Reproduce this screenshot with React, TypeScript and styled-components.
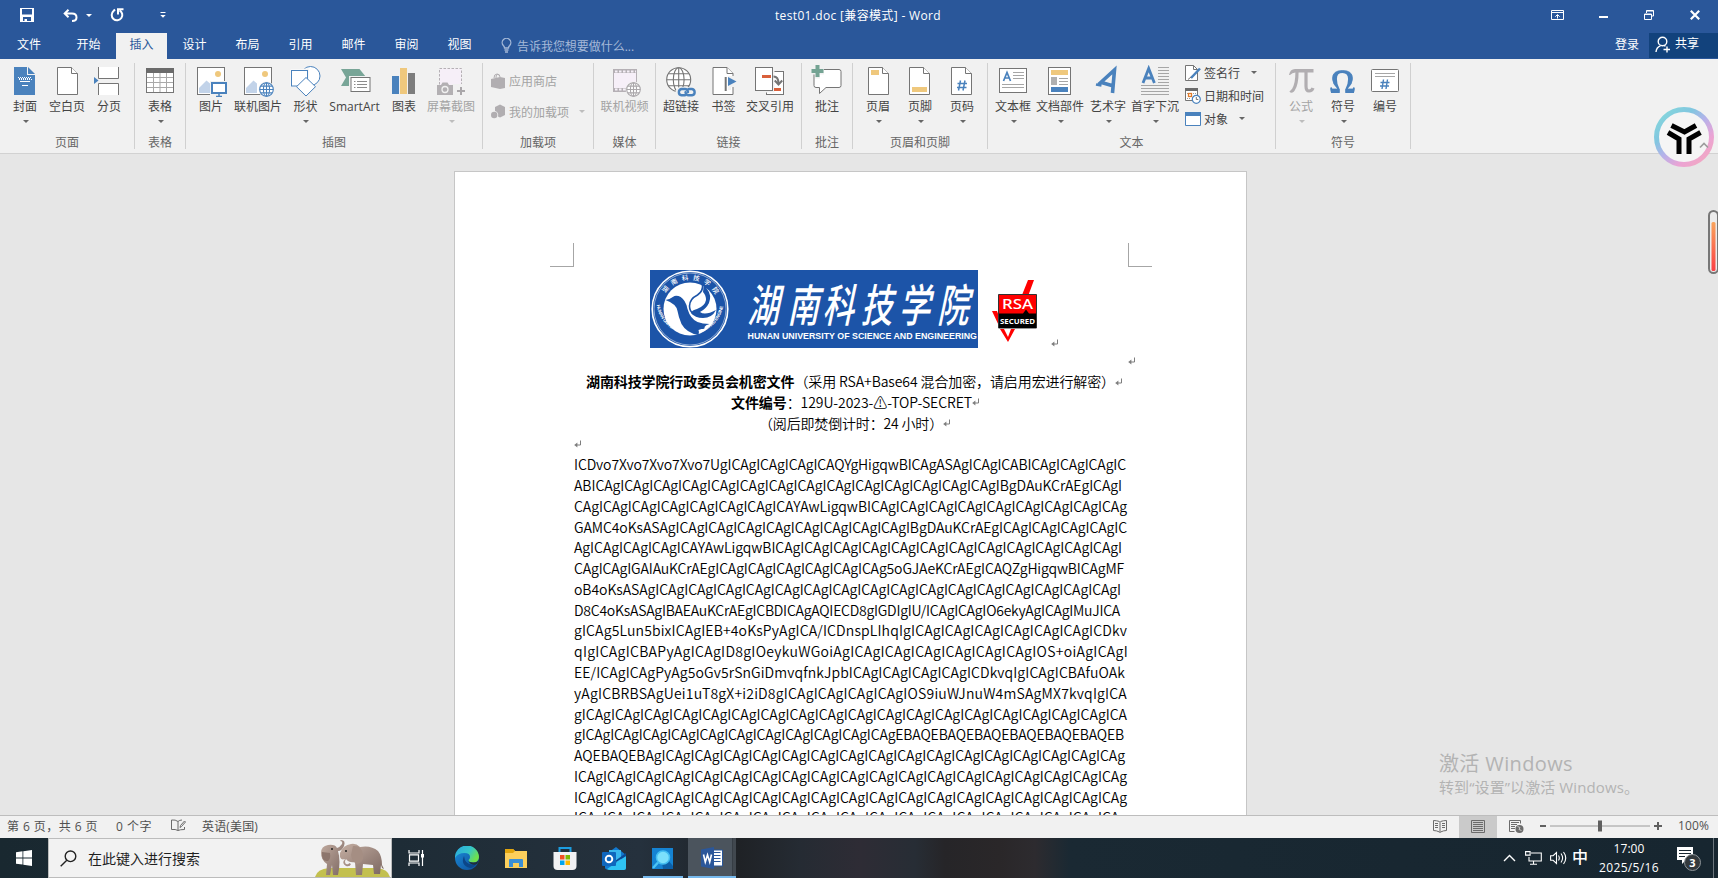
import React, { useLayoutEffect, useRef } from 'react';
import styled, { createGlobalStyle, css } from 'styled-components';

const BLUE = '#2a579a';
const ICON_BLUE = '#4a82bd';
const LINE = '#757575';
const YELLOW = '#efc87d';

const Global = createGlobalStyle`
  * { box-sizing: border-box; }
  html, body { margin: 0; padding: 0; overflow: hidden; }
  body { font-family: 'Open Sans', 'Noto Sans CJK SC', sans-serif; font-size: 12px; color: #444; }
  svg { display: block; flex: none; }
`;

const Screen = styled.div`
  position: relative;
  width: 1718px;
  height: 878px;
  display: flex;
  flex-direction: column;
  background: #e6e6e6;
  overflow: hidden;
`;

/* ---------- title bar and tabs ---------- */
const TitleBar = styled.header`
  position: relative;
  height: 33px;
  flex: none;
  display: flex;
  align-items: flex-start;
  justify-content: space-between;
  background: ${BLUE};
  color: #fff;
`;
const QuickAccess = styled.div`
  display: flex;
  align-items: center;
  height: 30px;
  padding-left: 20px;
`;
const Gap = styled.span<{ $w: number }>`
  width: ${p => p.$w}px;
  flex: none;
`;
const WindowTitle = styled.div`
  position: absolute;
  left: 775px;
  top: 6px;
  line-height: 20px;
  white-space: nowrap;
`;
const WindowButtons = styled.div`
  display: flex;
  height: 30px;
  align-items: center;
`;
const WinButton = styled.span`
  width: 46px;
  display: flex;
  justify-content: center;
`;

const TabRow = styled.nav`
  height: 26px;
  flex: none;
  display: flex;
  background: ${BLUE};
  color: #fff;
`;
const Tab = styled.span<{ $active?: boolean; $w?: number }>`
  width: ${p => p.$w ?? 51}px;
  margin-right: 2px;
  line-height: 24px;
  text-align: center;
  ${p => p.$active && css`background: #f1f1f1; color: ${BLUE};`}
`;
const TellMe = styled.span`
  display: flex;
  align-items: center;
  gap: 5px;
  padding: 0 0 1px 14px;
  color: #a5b9d8;
`;
const Account = styled.div`
  margin-left: auto;
  display: flex;
  line-height: 24px;
`;
const SignIn = styled.span`
  padding-right: 10px;
`;
const Share = styled.span`
  width: 69px;
  height: 25px;
  padding-left: 6px;
  display: flex;
  align-items: flex-start;
  gap: 4px;
  line-height: 22px;
  background: #12427c;
`;

/* ---------- ribbon ---------- */
const Ribbon = styled.section`
  height: 95px;
  flex: none;
  display: flex;
  background: #f1f1f1;
  border-bottom: 1px solid #d2d2d2;
`;
const Group = styled.div<{ $w: number }>`
  position: relative;
  width: ${p => p.$w}px;
  flex: none;
  display: flex;
  flex-direction: column;
  justify-content: space-between;
  padding: 6px 0 2px;
  &::after {
    content: '';
    position: absolute;
    right: 0;
    top: 4px;
    height: 86px;
    width: 1px;
    background: #d0d0d0;
  }
`;
const Buttons = styled.div`
  display: flex;
  padding-left: 2px;
`;
const GroupLabel = styled.div`
  text-align: center;
  line-height: 16px;
  padding-right: 1px;
  color: #666;
`;
const BigButton = styled.div<{ $w: number; $off?: boolean }>`
  width: ${p => p.$w}px;
  flex: none;
  display: flex;
  flex-direction: column;
  align-items: center;
  white-space: nowrap;
  color: ${p => (p.$off ? '#a3a3a3' : '#444')};
`;
const BigLabel = styled.span`
  margin-top: 2px;
  line-height: 16px;
`;
const Caret = styled.i<{ $off?: boolean; $mt?: number; $light?: boolean }>`
  width: 0;
  height: 0;
  flex: none;
  margin-top: ${p => p.$mt ?? 0}px;
  margin-left: 1px;
  border: 3px solid transparent;
  border-top: 3px solid ${p => (p.$light ? '#fff' : p.$off ? '#bdbdbd' : '#666')};
  border-bottom: 0;
`;
const SmallStack = styled.div<{ $pad: number; $row: number; $top?: number }>`
  display: flex;
  flex-direction: column;
  margin-top: ${p => p.$top ?? 0}px;
  padding-left: ${p => p.$pad}px;
  > div { height: ${p => p.$row}px; }
`;
const SmallButton = styled.div<{ $off?: boolean }>`
  display: flex;
  align-items: center;
  gap: 3px;
  white-space: nowrap;
  color: ${p => (p.$off ? '#a3a3a3' : '#444')};
`;

/* ---------- document ---------- */
const Workspace = styled.main`
  flex: 1;
  min-height: 0;
  overflow: hidden;
  padding: 17px 0 0 454px;
`;
const Page = styled.article`
  width: 793px;
  height: 1120px;
  background: #fff;
  border: 1px solid #c6c6c6;
  padding: 71px 94px 0 95px;
  color: #000;
  font-family: 'Noto Sans CJK SC', sans-serif;
  font-weight: 350;
  font-size: 14px;
`;
const Corners = styled.div`
  display: flex;
  justify-content: space-between;
`;
const Corner = styled.i<{ $side: 'left' | 'right' }>`
  width: 24px;
  height: 24px;
  border-bottom: 1px solid #a6a6a6;
  ${p => (p.$side === 'left' ? 'border-right' : 'border-left')}: 1px solid #a6a6a6;
`;
const Body = styled.div`
  padding: 3px 24px 0 24px;
`;
const LogoLine = styled.div`
  display: flex;
  align-items: flex-start;
  height: 80.5px;
  padding-left: 76px;
`;
const Drop = styled.span<{ $y: number }>`
  padding-top: ${p => p.$y}px;
  flex: none;
`;
const TextLine = styled.div<{ $x?: number }>`
  height: 20.77px;
  line-height: 20.77px;
  padding-left: ${p => p.$x ?? 0}px;
  display: flex;
  align-items: center;
  white-space: pre;
`;
const FitSpan = styled.span`
  white-space: pre;
  flex: none;
`;

const Fit = ({ w, children }: { w: number; children: React.ReactNode }) => {
  const ref = useRef<HTMLSpanElement>(null);
  useLayoutEffect(() => {
    const el = ref.current;
    if (!el) return;
    el.style.letterSpacing = '0px';
    const n = Array.from(el.textContent ?? '').length;
    el.style.letterSpacing = `${(w - el.getBoundingClientRect().width) / n}px`;
  }, [w]);
  return <FitSpan ref={ref}>{children}</FitSpan>;
};

const Mark = () => (
  <svg width="8" height="8" viewBox="0 0 8 8" fill="none" stroke="#7d7d7d">
    <path d="M6.500 .5v4.500H2" />
    <path d="M3.400 2.400v5.200L.2 5z" fill="#7d7d7d" stroke="none" />
  </svg>
);

/* ---------- status bar ---------- */
const StatusBar = styled.footer`
  height: 22px;
  flex: none;
  display: flex;
  align-items: center;
  background: #f1f1f1;
  box-shadow: 0 -1px 0 #bdbdbd;
  padding: 0 0 3px 7px;
  color: #505050;
  position: relative;
  white-space: pre;
`;
const ViewButton = styled.span<{ $on?: boolean }>`
  width: 38px;
  height: 22px;
  margin-bottom: -3px;
  padding-bottom: 2px;
  display: flex;
  justify-content: center;
  align-items: center;
  background: ${p => (p.$on ? '#cacaca' : 'transparent')};
`;

/* ---------- taskbar ---------- */
const Taskbar = styled.div`
  height: 40px;
  flex: none;
  display: flex;
  align-items: stretch;
  color: #fff;
  background: linear-gradient(90deg, #192830 0, #1e2c36 400px, #25313d 640px, #1f2226 740px, #252b33 800px, #2e2c35 860px,
    #272d35 915px, #262528 945px, #2a2729 1000px, #2d2b2f 1035px, #1a2933 1070px, #182731 1400px, #172630 1718px);
`;
const Start = styled.div`
  width: 48px;
  display: flex;
  justify-content: center;
  align-items: center;
`;
const Search = styled.div`
  width: 344px;
  border: 1px solid #bcbcbc;
  background: #f2f2f2;
  display: flex;
  align-items: center;
  padding-left: 11px;
  gap: 11px;
  color: #1f1f1f;
  font-size: 14px;
  > svg:last-child { margin-left: auto; align-self: flex-end; }
`;
const TaskButton = styled.div<{ $w?: number; $state?: 'open' | 'active' }>`
  position: relative;
  width: ${p => p.$w ?? 48}px;
  display: flex;
  justify-content: center;
  align-items: center;
  ${p => p.$state === 'active' && css`background: linear-gradient(90deg, #4b545d 0 44px, #363d44 44px 45px, #41484f 45px);`}
  ${p => p.$state && css`
    &::after {
      content: '';
      position: absolute;
      left: ${p.$state === 'open' ? 4 : 0}px;
      width: ${p.$state === 'open' ? 40 : 48}px;
      bottom: 0;
      height: 2px;
      background: #76b9ed;
    }`}
`;
const Tray = styled.div`
  margin-left: auto;
  display: flex;
  align-items: center;
`;
const Clock = styled.div`
  width: 70px;
  font-size: 12px;
  line-height: 19px;
  text-align: center;
  white-space: nowrap;
`;
const Ime = styled.span`
  font-size: 16px;
  font-weight: 500;
  line-height: 20px;
  padding: 0 1px 2px 5px;
`;

/* ---------- overlays ---------- */
const Watermark = styled.div`
  position: absolute;
  left: 1439px;
  top: 750px;
  color: #b3b3b3;
  white-space: pre;
`;
const MarkBig = styled.div`
  font-size: 20px;
  line-height: 27px;
`;
const MarkSmall = styled.div`
  font-size: 15px;
  line-height: 21px;
`;
const Floating = styled.div<{ $x: number; $y: number }>`
  position: absolute;
  left: ${p => p.$x}px;
  top: ${p => p.$y}px;
`;

/* ---------- ribbon icons (32 x 32) ---------- */
const I = ({ children }: { children: React.ReactNode }) => (
  <svg width="32" height="32" viewBox="0 0 32 32" fill="none">{children}</svg>
);
const Doc = ({ x }: { x: number }) => (
  <g stroke={LINE} fill="#fff">
    <path d={`M${x + 0.5} 2.500h14l6 6v21h-20z`} />
    <path d={`M${x + 14.5} 2.500v6h6`} />
  </g>
);
const Globe = ({ x, y, r, c }: { x: number; y: number; r: number; c: string }) => (
  <g stroke={c} fill="#fff" strokeWidth="1.100">
    <circle cx={x} cy={y} r={r} />
    <ellipse cx={x} cy={y} rx={r * 0.45} ry={r} />
    <path d={`M${x - r} ${y}h${2 * r}M${x} ${y - r}v${2 * r}M${x - r * 0.86} ${y - r * 0.5}h${r * 1.72}M${x - r * 0.86} ${y + r * 0.5}h${r * 1.72}`} />
  </g>
);
const PictureBase = () => (
  <>
    <rect x="2.500" y="2.500" width="27" height="27" fill="#fff" stroke={LINE} />
    <circle cx="23" cy="9" r="3" fill={YELLOW} />
    <path d="M4 28v-5l7.500-7.500 3.500 3V28z" fill="#c2d3e9" />
  </>
);

const icons: Record<string, React.ReactNode> = {
  cover: (
    <I>
      <path d="M5 2h13v8h8v20H5z" fill={ICON_BLUE} />
      <path d="M19 2l7 7h-7z" fill={ICON_BLUE} />
      <path d="M9 12.500h13M10 14.500h13" stroke="#fff" strokeDasharray="1 1" />
      <path d="M9 13.500h13" stroke="#fff" strokeDasharray="1 1" strokeDashoffset="1" />
      <path d="M11 16.500h10M13 20.500h6" stroke="#fff" />
    </I>
  ),
  blank: <I><Doc x={6} /></I>,
  pageBreak: (
    <I>
      <path d="M5.500 2v11.500h20V2M5.500 30V18.500h20V30" fill="#fff" stroke={LINE} />
      <path d="M1 12l4.500 3.500L1 19z" fill={ICON_BLUE} />
    </I>
  ),
  table: (
    <I>
      <rect x="2.500" y="3.500" width="27" height="24" fill="#fff" stroke={LINE} />
      <path d="M2 3h28v5H2z" fill="#6b6b6b" />
      <path d="M3 12.500h26M3 17.500h26M3 22.500h26M9.500 8v19M16 8v19M22.500 8v19" stroke="#a9a9a9" />
    </I>
  ),
  picture: (
    <I>
      <PictureBase />
      <rect x="15" y="16" width="18" height="15" fill="#f1f1f1" />
      <rect x="17" y="18" width="14" height="10" fill="#fff" stroke={ICON_BLUE} strokeWidth="2" />
      <path d="M24 29v2M21 31.500h6" stroke={ICON_BLUE} strokeWidth="1.500" />
    </I>
  ),
  onlinePic: <I><PictureBase /><circle cx="24.500" cy="24.500" r="8" fill="#f1f1f1" /><Globe x={24.5} y={24.5} r={6.8} c={ICON_BLUE} /></I>,
  shapes: (
    <I>
      <g fill="#fff" stroke={ICON_BLUE}>
        <circle cx="20.500" cy="11" r="9.500" />
        <rect x="0" y="4" width="18" height="18" stroke="#f1f1f1" />
        <rect x="1.500" y="5.500" width="16" height="15.500" />
        <path d="M16 12.500l9.500 9.200L16 31l-9.500-9.300z" />
      </g>
    </I>
  ),
  smartArt: (
    <I>
      <path d="M2 4h18.500l6.500 8-4 4H11v5H2l5-8.500z" fill="#78a597" />
      <rect x="10" y="11" width="22" height="17" fill="#f1f1f1" />
      <rect x="12" y="12.500" width="19" height="14" fill="#fff" stroke={LINE} />
      <path d="M15 16.500h1.500M18 16.500h10M15 19.500h1.500M18 19.500h10M15 22.500h1.500M18 22.500h10" stroke="#8c8c8c" />
    </I>
  ),
  chart: (
    <I>
      <path d="M4 11h7v18H4z" fill={ICON_BLUE} />
      <path d="M12 3h7v26h-7z" fill={YELLOW} />
      <path d="M20 8h7v21h-7z" fill="#7d7d7d" />
    </I>
  ),
  screenshot: (
    <I>
      <rect x="4.500" y="3.500" width="22" height="24" fill="#f6eff8" stroke="#b5b0b5" strokeDasharray="2.500 1.500" />
      <path d="M17 19h13v12H17z" fill="#f1f1f1" />
      <path d="M2 20h4l1.500-2.500h5L14 20h4v10H2z" fill="#b3b0b3" />
      <circle cx="10" cy="24.500" r="3" stroke="#f1f1f1" strokeWidth="1.300" />
      <path d="M22 26h8M26 22v8" stroke="#aaa7aa" strokeWidth="2" />
    </I>
  ),
  video: (
    <I>
      <rect x="4.500" y="4.500" width="23" height="22" fill="#f6eff8" stroke="#b5b0b5" />
      <path d="M5 6.500h22M5 24.500h22" stroke="#b5b0b5" strokeWidth="3" />
      <path d="M6 6.500h21M6 24.500h21" stroke="#f6eff8" strokeWidth="2" strokeDasharray="2.500 1.500" />
      <circle cx="24.500" cy="24.500" r="8" fill="#f1f1f1" />
      <Globe x={24.5} y={24.5} r={6.8} c="#aaa7aa" />
    </I>
  ),
  link: (
    <I>
      <Globe x={13.7} y={14.7} r={12} c={LINE} />
      <rect x="10.500" y="22" width="22" height="10" rx="5" fill="#f1f1f1" />
      <g stroke={ICON_BLUE} strokeWidth="2.400" strokeLinecap="round">
        <path d="M20 30.300h-3.500a3.200 3.200 0 0 1 0-6.300h3.500q2.500 0 3 3" />
        <path d="M23.500 24h3.500a3.200 3.200 0 0 1 0 6.300h-3.500q-2.500 0-3-3" />
      </g>
    </I>
  ),
  bookmark: (
    <I>
      <Doc x={4.5} />
      <path d="M20 11h9v11h-6v3h-3z" fill="#f1f1f1" />
      <path d="M17.700 12v14" stroke={LINE} strokeWidth="2" />
      <path d="M20 12l8.500 4.500L20 21z" fill={ICON_BLUE} />
    </I>
  ),
  crossRef: (
    <I>
      <rect x="12.500" y="6.500" width="17" height="23" fill="#fff" stroke={LINE} />
      <rect x=".5" y="1.500" width="20" height="26" fill="#f1f1f1" />
      <rect x="1.500" y="2.500" width="17" height="23" fill="#fff" stroke={LINE} />
      <path d="M8 11.500h9M20 24.500h7" stroke="#d9603b" strokeWidth="3" />
      <path d="M19.500 11.500q5 0 5 7M20.800 15.500l3.700 4 3.700-4" stroke={LINE} strokeWidth="2" />
    </I>
  ),
  comment: (
    <I>
      <path d="M5 4.500h23q2 0 2 2v14q0 2-2 2H15l-6.500 6v-6H5q-2 0-2-2v-14q0-2 2-2z" fill="#fff" stroke={LINE} />
      <path d="M0 3h4V-1h5v4h4v6.500H9v4H4v-4H0z" fill="#f1f1f1" />
      <path d="M.5 4h4V0h4v4h4v4h-4v4h-4V8h-4z" fill="#74a393" />
    </I>
  ),
  header: <I><Doc x={6} /><path d="M9 5h8v5H9z" fill={YELLOW} /></I>,
  footer: <I><Doc x={5} /><path d="M8 22h15v5H8z" fill={YELLOW} /></I>,
  pageNo: (
    <I>
      <Doc x={5} />
      <path d="M14.500 15.500l-2 10M19 15.500l-2 10M11.500 18.500h9.500M11 22.500h9.500" stroke={ICON_BLUE} strokeWidth="1.500" />
    </I>
  ),
  textBox: (
    <I>
      <rect x="2.500" y="3.500" width="27" height="24" fill="#fff" stroke={LINE} />
      <path d="M6.500 16L10 7.500 13.500 16M7.800 13h4.500" stroke={ICON_BLUE} strokeWidth="1.700" />
      <path d="M16 7.500h11M16 10.500h11M16 13.500h11M5 19.500h22M5 22.500h22" stroke="#a6a6a6" />
    </I>
  ),
  parts: (
    <I>
      <rect x="4.500" y="2.500" width="22" height="27" fill="#fff" stroke={LINE} />
      <path d="M7 5h17v5H7z" fill={YELLOW} />
      <path d="M7 12h6v8H7z" fill="#b0b0b0" />
      <path d="M15 13.500h9M15 16.500h9M15 19.500h9" stroke="#a6a6a6" />
      <path d="M7 22h17v5H7z" fill={ICON_BLUE} />
    </I>
  ),
  wordArt: (
    <I>
      <path d="M6.500 19.500L22.500 5 20.500 28M9.500 17.500l12 3.500" stroke={ICON_BLUE} strokeWidth="3.600" />
      <path d="M4 19.500l5.500 1" stroke={ICON_BLUE} strokeWidth="2.500" />
    </I>
  ),
  dropCap: (
    <I>
      <path d="M4 18L9.700 3.500 15.400 18M6 13h7.400" stroke={ICON_BLUE} strokeWidth="2.800" />
      <path d="M19 2.500h11M19 5.500h11M19 8.500h11M19 11.500h11M19 14.500h11M19 17.500h11M2 20.500h28M2 23.500h28M2 26.500h28M2 29.500h28" stroke="#a6a6a6" />
    </I>
  ),
  pi: (
    <I>
      <path d="M4 10q1-6 6-6h18.500v3.500H10.500Q7 7.500 5 10z" fill="#b1aeb1" />
      <path d="M12 7q0 12-3.500 17.500Q7 27 5.500 25.500M21 7v14q0 5 3 5t4-3" stroke="#b1aeb1" strokeWidth="3.200" />
    </I>
  ),
  omega: (
    <I>
      <path d="M4 22.500L4.800 27h7v-2.500Q9 20 9 14q0-7 6.500-7T22 14q0 6-2.800 10.500V27h7l.8-4.500" stroke={ICON_BLUE} strokeWidth="1.800" />
      <path d="M11 24Q5.500 19 5.500 13.500q0-8 10-8t10 8q0 5.500-5.500 10.500 2-5 2-10.500 0-6.500-6.500-6.500T9 13.500Q9 19 11 24zM4 24h8v3.500H4.500zM19 24h8l-.5 3.500H19z" fill={ICON_BLUE} stroke={ICON_BLUE} strokeWidth=".8" />
    </I>
  ),
  numbering: (
    <I>
      <rect x="2.500" y="4.500" width="27" height="22" rx="1" fill="#fff" stroke={LINE} />
      <path d="M6 8.500h20M6 11.500h20" stroke="#a6a6a6" />
      <path d="M14.500 14.500l-1.500 9.500M18.500 14.500l-1.500 9.500M11.500 17.500h9M11 21h9" stroke={ICON_BLUE} strokeWidth="1.400" />
    </I>
  ),
};

type Item = { icon: string; label: string; w: number; drop?: boolean; off?: boolean };
const Big = ({ icon, label, w, drop, off }: Item) => (
  <BigButton $w={w} $off={off}>
    {icons[icon]}
    <BigLabel>{label}</BigLabel>
    {drop && <Caret $mt={5} $off={off} />}
  </BigButton>
);
const BigGroup = ({ w, label, items, children }: { w: number; label: string; items: Item[]; children?: React.ReactNode }) => (
  <Group $w={w}>
    <Buttons>
      {items.map(i => <Big key={i.label} {...i} />)}
      {children}
    </Buttons>
    <GroupLabel>{label}</GroupLabel>
  </Group>
);

const tabs = ['开始', '插入', '设计', '布局', '引用', '邮件', '审阅', '视图'];

const bodyLines: [string, number][] = [
  ['ICDvo7Xvo7Xvo7Xvo7UgICAgICAgICAgICAQYgHigqwBICAgASAgICAgICABICAgICAgICAgIC', 552],
  ['ABICAgICAgICAgICAgICAgICAgICAgICAgICAgICAgICAgICAgICAgICAgIBgDAuKCrAEgICAgI', 548],
  ['CAgICAgICAgICAgICAgICAgICAgICAYAwLigqwBICAgICAgICAgICAgICAgICAgICAgICAgICAg', 553],
  ['GAMC4oKsASAgICAgICAgICAgICAgICAgICAgICAgICAgIBgDAuKCrAEgICAgICAgICAgICAgIC', 553],
  ['AgICAgICAgICAgICAYAwLigqwBICAgICAgICAgICAgICAgICAgICAgICAgICAgICAgICAgICAgI', 548],
  ['CAgICAgIGAIAuKCrAEgICAgICAgICAgICAgICAgICAg5oGJAeKCrAEgICAQZgHigqwBICAgMF', 550],
  ['oB4oKsASAgICAgICAgICAgICAgICAgICAgICAgICAgICAgICAgICAgICAgICAgICAgICAgICAgI', 547],
  ['D8C4oKsASAgIBAEAuKCrAEgICBDICAgAQIECD8gIGDIgIU/ICAgICAgIO6ekyAgICAgIMuJICA', 546],
  ['gICAg5Lun5bixICAgIEB+4oKsPyAgICA/ICDnspLIhqIgICAgICAgICAgICAgICAgICAgICDkv', 553],
  ['qIgICAgICBAPyAgICAgID8gIOeykuWGoiAgICAgICAgICAgICAgICAgICAgIOS+oiAgICAgI', 554],
  ['EE/ICAgICAgPyAg5oGv5rSnGiDmvqfnkJpbICAgICAgICAgICAgICDkvqIgICAgICBAfuOAk', 551],
  ['yAgICBRBSAgUei1uT8gX+i2iD8gICAgICAgICAgICAgIOS9iuWJnuW4mSAgMX7kvqIgICA', 553],
  ['gICAgICAgICAgICAgICAgICAgICAgICAgICAgICAgICAgICAgICAgICAgICAgICAgICAgICAgICA', 553],
  ['gICAgICAgICAgICAgICAgICAgICAgICAgICAgICAgICAgEBAQEBAQEBAQEBAQEBAQEBAQEB', 550],
  ['AQEBAQEBAgICAgICAgICAgICAgICAgICAgICAgICAgICAgICAgICAgICAgICAgICAgICAgICAg', 551],
  ['ICAgICAgICAgICAgICAgICAgICAgICAgICAgICAgICAgICAgICAgICAgICAgICAgICAgICAgICAg', 553],
  ['ICAgICAgICAgICAgICAgICAgICAgICAgICAgICAgICAgICAgICAgICAgICAgICAgICAgICAgICAg', 553],
  ['ICAgICAgICAgICAgICAgICAgICAgICAgICAgICAgICAgICAgICAgICAgICAgICAgICAgICAgICAg', 553],
];

const UniversityBanner = () => (
  <svg width="328" height="78" viewBox="0 0 328 78" overflow="visible">
    <rect width="328" height="78" fill="#1c54a8" />
    <g fill="none" stroke="#fff">
      <circle cx="40" cy="39" r="37.800" strokeWidth="1.600" />
      <circle cx="40" cy="39" r="36" strokeWidth=".5" />
    </g>
    <circle cx="40" cy="39" r="26.500" fill="#fff" />
    <defs>
      <path id="ringBottom" d="M6.800 35a33.500 33.500 0 0 0 66.400 0" />
      <path id="ringTop" d="M13.500 27a29 29 0 0 1 53 0" />
    </defs>
    <text fontSize="4.500" fontWeight="700" fill="#fff" fontFamily="Liberation Sans, sans-serif">
      <textPath href="#ringBottom" textLength="108">HUNAN UNIVERSITY OF SCIENCE AND ENGINEERING</textPath>
    </text>
    <text fontSize="6.500" fontWeight="500" fill="#fff" fontFamily="Noto Sans CJK SC, sans-serif">
      <textPath href="#ringTop" startOffset="4" textLength="60">湖南科技学院</textPath>
    </text>
    <g fill="#1c54a8">
      <path d="M15.500 30q5-1 9-4 6-1 10 5 2 3 3 8 3 10 10 13 5 2 12 2-4 1-5 3 1 2-3 2l-3 1q1 2 0 5-12-2-17-11-3-7-4-13-1-7-12-11z" />
      <path d="M54 13l3 6q5 6 2 14-3 6-9 9 5 4 16-2-4 8-13 8-8 0-12-5 1-3 6-4 8-3 9-9 0-5-3-8z" />
    </g>
    <path d="M52.500 14q1 7-5 11-8 4-8 11 0 5 4 8" fill="none" stroke="#1c54a8" strokeWidth="1.600" />
    <text x="144 201 251 306 360 415" y="52" fontSize="45" fill="#fff" fontFamily="Noto Sans CJK SC, sans-serif" fontWeight="500"
      transform="translate(7.500 0) skewX(-12) scale(.7 1)">湖南科技学院</text>
    <text x="97.500" y="69" fontSize="9.500" fontWeight="700" fill="#fff" fontFamily="Liberation Sans, sans-serif"
      textLength="229.500" lengthAdjust="spacingAndGlyphs">HUNAN UNIVERSITY OF SCIENCE AND ENGINEERING</text>
  </svg>
);

const RsaBadge = () => (
  <svg width="46" height="64" viewBox="0 0 46 64" overflow="visible">
    <path d="M36 1h6l-5.500 15h-6.500zM0 32h5l3 8v9zM8 50h4l4 8 3-8h4l-7 13z" fill="#f00" />
    <path d="M6.500 15.500h38v33.500h-38z" fill="#f00" stroke="#333" />
    <path d="M7 34.500h24l3-4 3 4h7V49H7z" fill="#000" />
    <text x="10" y="30" fontSize="15" fill="#fff" fontFamily="Noto Sans, sans-serif" fontWeight="500" textLength="31" lengthAdjust="spacingAndGlyphs">RSA</text>
    <text x="8" y="44.500" fontSize="7.500" fill="#fff" fontFamily="Noto Sans, sans-serif" fontWeight="700" textLength="35" lengthAdjust="spacingAndGlyphs">SECURED</text>
  </svg>
);

const Elephants = () => (
  <svg width="76" height="37" viewBox="0 0 76 37">
    <defs>
      <linearGradient id="skin" x1="0" y1="0" x2="1" y2="1">
        <stop offset="0" stopColor="#c4aea2" />
        <stop offset="1" stopColor="#7b6660" />
      </linearGradient>
    </defs>
    <path d="M0 37q2-8 14-9h48q11 1 13 9z" fill="#c3c04f" />
    <path d="M11 35l1-11q-6-4-6-11 0-7 7-8 7-1 9 3 3-1 5-4 1-3-2-3l1-1q5 0 3 6-2 5-6 5 3 10 0 24h-5l-1-10-2 10z" fill="url(#skin)" />
    <path d="M7 12q-1 10 6 9 3-2 2-8z" fill="#8d766d" />
    <path d="M30 19q-6 2-5-6 3-8 11-9 5-1 9 3 11-2 18 4 4 5 4 14l2 4-2-1-1-3-1 9h-6l-1-9-10-1-1 11h-6l-1-13q-6 1-9-3-2 3 0 5 3 1 3-1l2 1q-1 3-5 2-5-3-1-7z" fill="url(#skin)" />
    <path d="M38 6q9-1 10 9 1 8-6 9-5-2-6-9z" fill="#a58e83" />
    <circle cx="31" cy="11" r="1" fill="#222" />
    <circle cx="17" cy="9" r="1" fill="#222" />
  </svg>
);

export default function App() {
  return (
    <>
      <Global />
      <Screen>
        <TitleBar>
          <QuickAccess>
            <svg width="14" height="14" viewBox="0 0 14 14"><path d="M0 0h14v14H0zM2 1v5.500h10V1zM3 9v4h1.500v-2H7v2h4V9z" fill="#fff" fillRule="evenodd" /></svg>
            <Gap $w={29} />
            <svg width="15" height="13" viewBox="0 0 15 13" fill="none" stroke="#fff" strokeWidth="2"><path d="M1.500 4.500h7.500q4.500 0 4.500 4 0 3.500-4.500 3.500M5.500.8L1.700 4.500l3.800 3.700" /></svg>
            <Gap $w={7} />
            <Caret $light />
            <Gap $w={18} />
            <svg width="14" height="14" viewBox="0 0 14 14" fill="none" stroke="#fff" strokeWidth="2"><path d="M3.500 3A5.300 5.300 0 1 0 9.500 2.300M8 6.500V1.200h5.500M3.500 3L5 1.500" /></svg>
            <Gap $w={36} />
            <svg width="6" height="6" viewBox="0 0 6 6"><path d="M.5 0h5v1h-5zM.3 3h5.400L3 5.800z" fill="#fff" /></svg>
          </QuickAccess>
          <WindowTitle><Fit w={166}>test01.doc [兼容模式] - Word</Fit></WindowTitle>
          <WindowButtons>
            <WinButton><svg width="13" height="10" viewBox="0 0 13 10" fill="none" stroke="#fff"><path d="M.5.5h12v9H.5zM.5 2.500h12M6.500 8.500V5M4.300 6.700l2.200-2.200 2.200 2.200" /></svg></WinButton>
            <WinButton><svg width="9" height="6" viewBox="0 0 9 6"><path d="M0 4h9v2H0z" fill="#fff" /></svg></WinButton>
            <WinButton><svg width="10" height="10" viewBox="0 0 10 10" fill="none" stroke="#fff"><path d="M.5 4h7v5.500h-7zM.5 4.500h7M2.500 3V.5h7V6H8M2.500 1h7" /></svg></WinButton>
            <WinButton><svg width="10" height="10" viewBox="0 0 10 10" stroke="#fff" strokeWidth="2.200"><path d="M.8.8l8.400 8.400M9.200.8L.8 9.200" /></svg></WinButton>
          </WindowButtons>
        </TitleBar>

        <TabRow>
          <Tab $w={58}>文件</Tab>
          <Gap $w={3} />
          {tabs.map(t => <Tab key={t} $active={t === '插入'}>{t}</Tab>)}
          <TellMe>
            <svg width="11" height="15" viewBox="0 0 11 15" fill="none" stroke="#a5b9d8" strokeWidth="1.300"><path d="M3.500 10q0-1.500-1.200-2.500A4.300 4.300 0 1 1 8.700 7.500Q7.500 8.500 7.500 10zM3.500 12h4M4 14h3" /></svg>
            <Fit w={117}>告诉我您想要做什么...</Fit>
          </TellMe>
          <Account>
            <SignIn>登录</SignIn>
            <Share>
              <svg width="16" height="20" viewBox="0 -2 16 20" fill="none" stroke="#fff" strokeWidth="1.400"><circle cx="7.500" cy="6.500" r="4.300" /><path d="M1 17q.5-5 4.500-6.200M9 10.500l1.500.7M8.500 14.500h6.500M12 11.500v6" /></svg>
              共享
            </Share>
          </Account>
        </TabRow>

        <Ribbon>
          <BigGroup w={135} label="页面" items={[
            { icon: 'cover', label: '封面', w: 46, drop: true },
            { icon: 'blank', label: '空白页', w: 38 },
            { icon: 'pageBreak', label: '分页', w: 46 },
          ]} />
          <BigGroup w={51} label="表格" items={[{ icon: 'table', label: '表格', w: 46, drop: true }]} />
          <BigGroup w={297} label="插图" items={[
            { icon: 'picture', label: '图片', w: 46 },
            { icon: 'onlinePic', label: '联机图片', w: 48 },
            { icon: 'shapes', label: '形状', w: 47, drop: true },
            { icon: 'smartArt', label: 'SmartArt', w: 51 },
            { icon: 'chart', label: '图表', w: 48 },
            { icon: 'screenshot', label: '屏幕截图', w: 46, drop: true, off: true },
          ]} />
          <Group $w={111}>
            <SmallStack $pad={8} $row={31}>
              <SmallButton $off>
                <svg width="15" height="16" viewBox="0 0 15 16"><path d="M0 6l9-2 5 1v10l-5 1-9-2z" fill="#b1aeb1" /><path d="M3 5q0-4 3-4t3 3M5 5q0-5 3-3" fill="none" stroke="#b1aeb1" /></svg>
                应用商店
              </SmallButton>
              <SmallButton $off>
                <svg width="15" height="15" viewBox="0 0 15 15" fill="#b1aeb1"><path d="M4 3l5-2.500L14 3v8l-5 2.500-2-1Q8 8 4 7z" /><circle cx="3.200" cy="11" r="3.200" /></svg>
                我的加载项
                <Gap $w={3} />
                <Caret $off />
              </SmallButton>
            </SmallStack>
            <GroupLabel>加载项</GroupLabel>
          </Group>
          <BigGroup w={62} label="媒体" items={[{ icon: 'video', label: '联机视频', w: 57, off: true }]} />
          <BigGroup w={146} label="链接" items={[
            { icon: 'link', label: '超链接', w: 46 },
            { icon: 'bookmark', label: '书签', w: 39 },
            { icon: 'crossRef', label: '交叉引用', w: 54 },
          ]} />
          <BigGroup w={51} label="批注" items={[{ icon: 'comment', label: '批注', w: 46 }]} />
          <BigGroup w={135} label="页眉和页脚" items={[
            { icon: 'header', label: '页眉', w: 46, drop: true },
            { icon: 'footer', label: '页脚', w: 38, drop: true },
            { icon: 'pageNo', label: '页码', w: 46, drop: true },
          ]} />
          <BigGroup w={288} label="文本" items={[
            { icon: 'textBox', label: '文本框', w: 46, drop: true },
            { icon: 'parts', label: '文档部件', w: 48, drop: true },
            { icon: 'wordArt', label: '艺术字', w: 48, drop: true },
            { icon: 'dropCap', label: '首字下沉', w: 46, drop: true },
          ]}>
            <SmallStack $pad={7} $row={23} $top={-4}>
              <SmallButton>
                <svg width="16" height="16" viewBox="0 0 16 16" fill="none"><path d="M.5.500h8l4 4v11H.500z" fill="#fff" stroke={LINE} /><path d="M8.500.5v4h4" stroke={LINE} /><path d="M15 3.500L6 13" stroke={ICON_BLUE} strokeWidth="2.500" /><path d="M3 14.500l3-2.500" stroke={LINE} /></svg>
                签名行
                <Gap $w={4} />
                <Caret />
              </SmallButton>
              <SmallButton>
                <svg width="16" height="16" viewBox="0 0 16 16" fill="none"><path d="M.5.500h12v12H.500z" fill="#fff" stroke={LINE} /><path d="M0 0h13v3H0z" fill="#6b6b6b" /><path d="M2 5.500h9M2 10.500h4" stroke="#999" strokeDasharray="1 1" /><rect x="3.500" y="5.500" width="3" height="3" stroke="#e07b2a" strokeWidth="1.300" /><circle cx="11.300" cy="11.300" r="4" fill="#fff" stroke={ICON_BLUE} strokeWidth="1.200" /><path d="M11.300 9v2.500h2" stroke={LINE} /></svg>
                日期和时间
              </SmallButton>
              <SmallButton>
                <svg width="16" height="14" viewBox="0 0 16 14" fill="none"><path d="M.5.500h15v13H.500z" fill="#fff" stroke={ICON_BLUE} /><path d="M0 0h16v4H0z" fill={ICON_BLUE} /></svg>
                对象
                <Gap $w={4} />
                <Caret />
              </SmallButton>
            </SmallStack>
          </BigGroup>
          <BigGroup w={135} label="符号" items={[
            { icon: 'pi', label: '公式', w: 46, drop: true, off: true },
            { icon: 'omega', label: '符号', w: 38, drop: true },
            { icon: 'numbering', label: '编号', w: 46 },
          ]} />
        </Ribbon>

        <Workspace>
          <Page>
            <Corners><Corner $side="left" /><Corner $side="right" /></Corners>
            <Body>
              <LogoLine>
                <UniversityBanner />
                <Gap $w={14} />
                <Drop $y={9}><RsaBadge /></Drop>
                <Gap $w={13} />
                <Drop $y={69}><Mark /></Drop>
              </LogoLine>
              <TextLine $x={554}><Mark /></TextLine>
              <TextLine $x={12}>
                <Fit w={529}><b>湖南科技学院行政委员会机密文件</b>（采用 RSA+Base64 混合加密，请启用宏进行解密）</Fit>
                <Mark />
              </TextLine>
              <TextLine $x={157}>
                <Fit w={241}><b>文件编号</b>：129U-2023-⚠-TOP-SECRET</Fit>
                <Mark />
              </TextLine>
              <TextLine $x={185}>
                <Fit w={184}>（阅后即焚倒计时：24 小时）</Fit>
                <Mark />
              </TextLine>
              <TextLine><Mark /></TextLine>
              {bodyLines.map(([text, w], i) => (
                <TextLine key={i}><Fit w={w}>{text}</Fit></TextLine>
              ))}
            </Body>
          </Page>
        </Workspace>

        <StatusBar>
          <Fit w={91}>第 6 页，共 6 页</Fit>
          <Gap $w={18} />
          <Fit w={36}>0 个字</Fit>
          <Gap $w={19} />
          <svg width="15" height="13" viewBox="0 0 15 13" fill="none" stroke="#6b6b6b"><path d="M7 11.500Q4.500 10 .5 10.500V1Q4.500.5 7 2.500zM7 2.500Q8.500 1 11 1M7 11.500q2-1 6.500-1V8M9 8.500l.5-2 4-4.500 1 1-4 4.500z" /></svg>
          <Gap $w={16} />
          <Fit w={56}>英语(美国)</Fit>
          <Gap $w={1163} />
          <ViewButton>
            <svg width="14" height="13" viewBox="0 0 14 13" fill="none" stroke="#6b6b6b"><path d="M6.500 1.500q-3-1-6-1v10q3 0 6 1.500M7.500 1.500q3-1 6-1v10q-3 0-6 1.500M7 1.500V13M2 3.500h3M2 5.500h3M2 7.500h3M9 3.500h3M9 5.500h3M9 7.500h3" /></svg>
          </ViewButton>
          <ViewButton $on>
            <svg width="14" height="13" viewBox="0 0 14 13" fill="none" stroke="#6b6b6b"><path d="M.5.500h13v12H.500zM2 2.500h10M2 4.500h10M2 6.500h10M2 8.500h10M2 10.500h10" /></svg>
          </ViewButton>
          <ViewButton>
            <svg width="15" height="13" viewBox="0 0 15 13" fill="none" stroke="#6b6b6b"><path d="M11.500 3.500v-3H.500v11h5M2 2.500h8M2 4.500h6M2 6.500h4M2 8.500h4" /><circle cx="10.500" cy="9" r="4" fill="#6b6b6b" stroke="none" /><path d="M8.500 6.500l2.500 1-1 2 2.500 1" stroke="#ddd" strokeWidth=".8" /></svg>
          </ViewButton>
          <Gap $w={5} />
          <svg width="122" height="12" viewBox="0 0 122 12"><path d="M0 5h6v2H0zM114 5h8v2h-8zM117 2h2v8h-2z" fill="#606060" /><path d="M10 6h100" stroke="#9a9a9a" /><path d="M58 .5h4v11h-4z" fill="#606060" /></svg>
          <Gap $w={16} />
          <Fit w={31}>100%</Fit>
        </StatusBar>

        <Taskbar>
          <Start><svg width="16" height="16" viewBox="0 0 16 16"><path d="M0 2.200l6.500-.9v6.200H0zM7.300 1.200L16 0v7.500H7.300zM0 8.400h6.500v6.200L0 13.700zM7.300 8.400H16V16l-8.700-1.200z" fill="#fff" /></svg></Start>
          <Search>
            <svg width="17" height="17" viewBox="0 0 17 17" fill="none" stroke="#222" strokeWidth="1.400"><circle cx="10.500" cy="6.300" r="5.300" /><path d="M6.800 10.200L.7 16.200" /></svg>
            <Fit w={112}>在此键入进行搜索</Fit>
            <Elephants />
          </Search>
          <TaskButton><svg width="17" height="16" viewBox="0 0 17 16" fill="none" stroke="#fff" strokeWidth="1.200"><path d="M1 0v3h10V0M1 16v-3h10v3M1.500 4.800h9v6.400h-9zM14.500 0v16" /><path d="M13 4h3v3.500h-3z" fill="#fff" stroke="none" /></svg></TaskButton>
          <Gap $w={3} />
          <TaskButton>
            <svg width="24" height="24" viewBox="0 0 24 24">
              <defs>
                <linearGradient id="edgeA" x1="0" y1="0" x2="1" y2=".5"><stop offset="0" stopColor="#2aa7e0" /><stop offset=".6" stopColor="#35c5c9" /><stop offset="1" stopColor="#6fe04b" /></linearGradient>
                <linearGradient id="edgeB" x1="0" y1="0" x2="1" y2="1"><stop offset="0" stopColor="#1b8fdc" /><stop offset="1" stopColor="#0d4b96" /></linearGradient>
              </defs>
              <circle cx="12" cy="12" r="12" fill="url(#edgeB)" />
              <path d="M0 12A12 12 0 0 1 24 11q0 5.500-6 5.500-4.500 0-4.500-2.500 1.500-1 1.500-3 0-4-5.500-4Q3 7 0 12z" fill="url(#edgeA)" />
              <path d="M9 10q-4 9 6 12 4 0 7-5-2 1.500-5.500 1.500Q10 18 9 10z" fill="#0c4688" />
              <path d="M24 12q-1 5-6 4.500-4.500 0-4.500-2.500 0 3 4 4.500 4 .5 5-1z" fill="#202e39" />
            </svg>
          </TaskButton>
          <Gap $w={1} />
          <TaskButton>
            <svg width="22" height="19" viewBox="0 0 22 19"><path d="M0 0h8l2 2h12v17H0z" fill="#fccf5c" /><path d="M0 0h8l2 2-2 2H0z" fill="#e2a50d" /><path d="M4 11q0-1 1-1h12q1 0 1 1v7h-4v-4H8v4H4z" fill="#3b8fd6" /></svg>
          </TaskButton>
          <Gap $w={1} />
          <TaskButton>
            <svg width="24" height="24" viewBox="0 0 24 24"><path d="M.5 6h23v14q0 4-4 4h-15q-4 0-4-4z" fill="#f1f1f3" /><path d="M6.500 6V2h11v4" fill="none" stroke="#1c9de0" strokeWidth="2" /><path d="M7 9h4.500v4.500H7z" fill="#f25022" /><path d="M12.500 9H17v4.500h-4.500z" fill="#7fba00" /><path d="M7 14.500h4.500V19H7z" fill="#00a4ef" /><path d="M12.500 14.500H17V19h-4.500z" fill="#ffb900" /></svg>
          </TaskButton>
          <TaskButton $w={50}>
            <svg width="24" height="23" viewBox="0 0 24 23"><path d="M3 8L14 0l10 8v13q0 1.500-2 1.500H6q-3 0-3-2z" fill="#1279cf" /><path d="M7 3h12v12H7z" fill="#38b6ee" /><path d="M24 9L5 22q1 1 3 1h14q2 0 2-2z" fill="#2fc3f3" /><path d="M14 15L24 9V6L13 14z" fill="#0b4a94" /><rect y="5" width="14" height="14" rx="1" fill="#0f67bd" /><circle cx="7" cy="12" r="3.300" fill="none" stroke="#fff" strokeWidth="1.900" /></svg>
          </TaskButton>
          <TaskButton $state="open" $w={47}>
            <svg width="21" height="21" viewBox="0 0 21 21"><path d="M0 0h21v21H0z" fill="#1583d2" /><path d="M10 14l5-3 6 7v3H11z" fill="#0b5fa8" /><circle cx="11" cy="9.500" r="6.500" fill="#7be0fb" stroke="#43bdf0" strokeWidth="1.500" /><path d="M6 14.500L1 20" stroke="#4cc4f4" strokeWidth="2.400" /></svg>
          </TaskButton>
          <Gap $w={2} />
          <TaskButton $state="active">
            <svg width="22" height="22" viewBox="0 0 22 22"><path d="M11 3h10.500v16H11z" fill="#fff" stroke="#2b579a" /><path d="M13 5.500h6.500M13 8.500h6.500M13 11.500h6.500M13 14.500h6.500" stroke="#2b579a" /><path d="M0 2.500L13 0v22L0 19.500z" fill="#2b579a" /><path d="M2.500 7.500l1.800 7.500 2.200-7 2.200 7 1.800-7.500" fill="none" stroke="#fff" strokeWidth="1.600" /></svg>
          </TaskButton>
          <Tray>
            <svg width="13" height="8" viewBox="0 0 13 8" fill="none" stroke="#fff" strokeWidth="1.400"><path d="M1 7l5.500-5.500L12 7" /></svg>
            <Gap $w={9} />
            <svg width="17" height="14" viewBox="0 0 17 14" fill="none" stroke="#fff" strokeWidth="1.100"><path d="M6 2h10.300v8H4V6M.600.600h4.500v3.500H.600zM8.500 10v3M5 13.300h7" /></svg>
            <Gap $w={8} />
            <svg width="17" height="14" viewBox="0 0 17 14" fill="none" stroke="#fff" strokeWidth="1.100"><path d="M.6 4.700h2.500L6.500 1.500v11L3.100 9.300H.600zM8.500 4.500q1.600 2.500 0 5M11 2.500q3.200 4.500 0 9M13.500 1q4.500 6 0 12" /></svg>
            <Ime>中</Ime>
            <Gap $w={5} />
            <Clock>
              <div><Fit w={31}>17:00</Fit></div>
              <div><Fit w={60}>2025/5/16</Fit></div>
            </Clock>
            <Gap $w={13} />
            <svg width="25" height="28" viewBox="0 0 25 28"><path d="M0 3h16v13H9l-4 4v-4H0z" fill="#fff" /><path d="M2 6.500h12M2 9.500h12M2 12.500h6" stroke="#182731" /><circle cx="15.500" cy="18.500" r="8" fill="#33393d" stroke="#8d9499" /><text x="15.500" y="22.500" fontSize="11" fontWeight="700" fill="#fff" textAnchor="middle" fontFamily="Open Sans, sans-serif">3</text></svg>
            <Gap $w={11} />
            <svg width="5" height="40" viewBox="0 0 5 40"><path d="M.5 0v40" stroke="#6b757c" /></svg>
          </Tray>
        </Taskbar>

        <Watermark>
          <MarkBig><Fit w={134}>激活 Windows</Fit></MarkBig>
          <MarkSmall><Fit w={200}>转到“设置”以激活 Windows。</Fit></MarkSmall>
        </Watermark>

        <Floating $x={1654} $y={107}>
          <svg width="60" height="60" viewBox="0 0 60 60">
            <defs>
              <linearGradient id="ring" x1=".15" y1=".1" x2=".85" y2=".9">
                <stop offset="0" stopColor="#84d3dd" />
                <stop offset=".25" stopColor="#82c6e0" />
                <stop offset=".5" stopColor="#b5b2ea" />
                <stop offset=".8" stopColor="#eba3d4" />
                <stop offset="1" stopColor="#f0a7c6" />
              </linearGradient>
            </defs>
            <circle cx="30" cy="30" r="27.500" fill="#f5f5f5" stroke="url(#ring)" strokeWidth="5" />
            <g fill="none" stroke="#000" strokeWidth="5">
              <path d="M17.500 18.500L30.500 25 42 18.500" />
              <path d="M14 25.500l11 6.500v15" />
              <path d="M46.500 25.500L35 32v15" />
            </g>
            <path d="M46 40.500l4-4 4 4" fill="none" stroke="#9c9c9c" strokeWidth="1.600" />
          </svg>
        </Floating>
        <Floating $x={1708} $y={210}>
          <svg width="10" height="64" viewBox="0 0 10 64">
            <defs><linearGradient id="heat" x1="0" y1="0" x2="0" y2="1"><stop offset="0" stopColor="#f9a45c" /><stop offset="1" stopColor="#fb3f45" /></linearGradient></defs>
            <rect x="1" y="1" width="9" height="62" rx="4.500" fill="#ececec" stroke="#777" strokeWidth="2" />
            <rect x="3.500" y="12" width="4" height="49" rx="1.500" fill="url(#heat)" />
          </svg>
        </Floating>
      </Screen>
    </>
  );
}
